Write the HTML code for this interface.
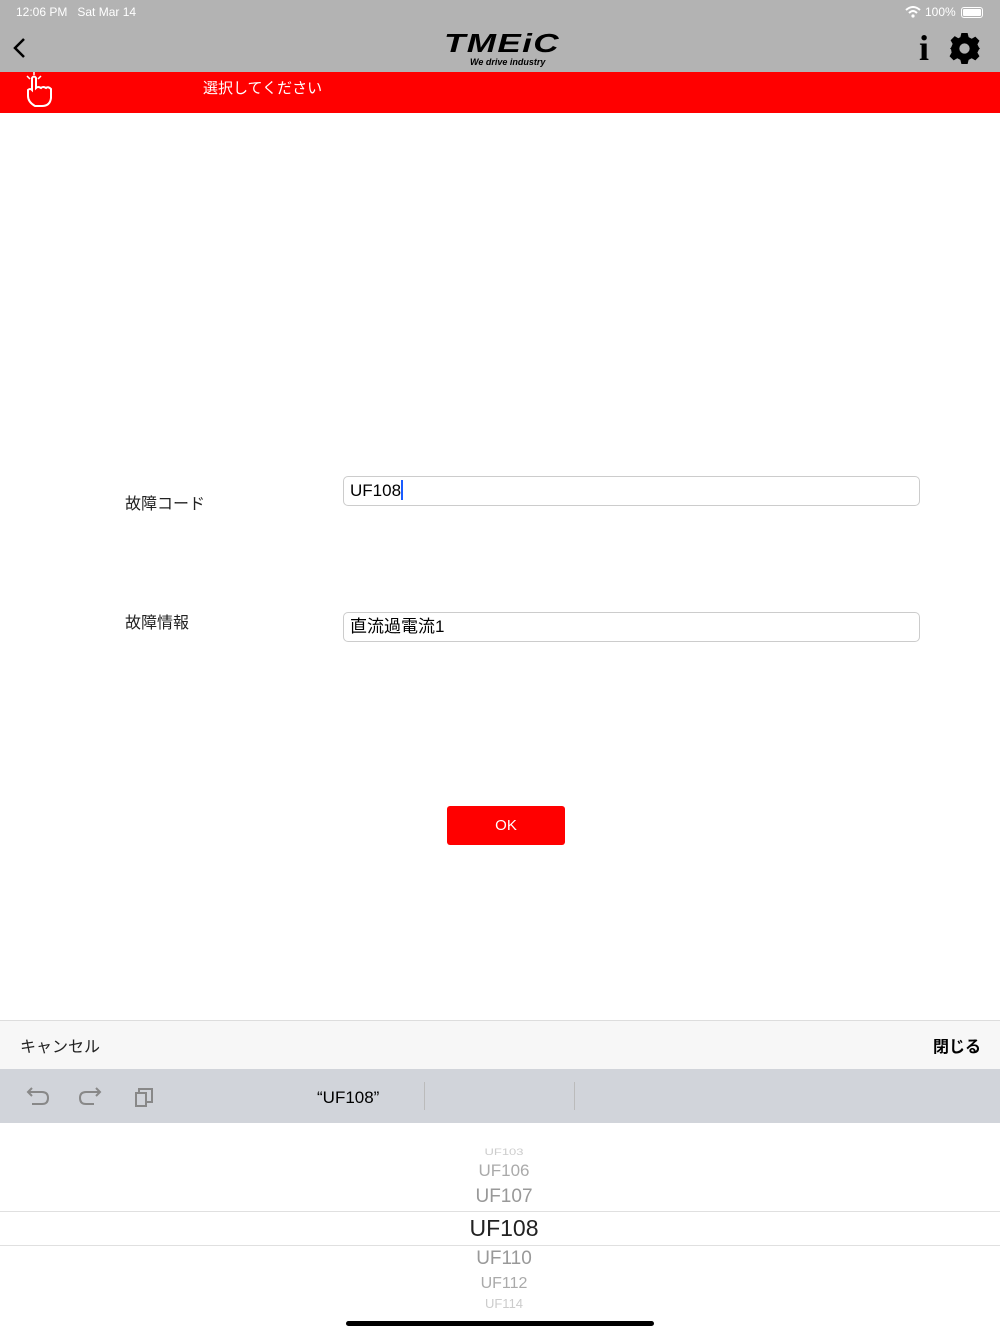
<!DOCTYPE html>
<html><head><meta charset="utf-8"><style>
*{margin:0;padding:0;box-sizing:border-box}
body{width:1000px;height:1334px;position:relative;background:#fff;font-family:"Liberation Sans","Noto Sans CJK JP",sans-serif;overflow:hidden}
.a{position:absolute}
.p{left:4px;width:1000px;text-align:center}
</style></head><body>
<div class="a" style="left:0;top:0;width:1000px;height:72px;background:#b3b3b3"></div>
<div class="a" style="left:16px;top:5px;font-size:12px;color:#fff">12:06 PM&nbsp;&nbsp; Sat Mar 14</div>
<div class="a" style="left:925px;top:5px;font-size:12px;color:#fff">100%</div>
<div class="a" style="left:961px;top:7px;width:22px;height:11px;border:1px solid #fff;border-radius:3px;padding:1px"><div style="background:#fff;width:100%;height:100%;border-radius:1px"></div></div>
<svg class="a" style="left:905px;top:6px" width="16" height="12"><path d="M1 4 Q8 -2 15 4 M4 7 Q8 3 12 7" stroke="#fff" stroke-width="2" fill="none"/><circle cx="8" cy="10" r="1.6" fill="#fff"/></svg>
<svg class="a" style="left:10px;top:36px" width="20" height="24"><path d="M14 3 L5 12 L14 21" stroke="#000" stroke-width="2.5" fill="none"/></svg>
<div class="a" style="left:444px;top:28px;font-size:26px;font-weight:bold;font-style:italic;letter-spacing:1px;color:#000;transform:scaleX(1.35);transform-origin:left top">TMEiC</div>
<div class="a" style="left:470px;top:57px;font-size:9px;font-style:italic;font-weight:bold;color:#000">We drive industry</div>
<div class="a" style="left:919px;top:30px;font-size:36px;font-weight:bold;font-family:'Liberation Serif',serif;color:#000;line-height:36px">i</div>
<svg class="a" style="left:948px;top:32px" width="33" height="33" viewBox="0 0 32 32"><path fill="#000" d="M13 1h6l1 4 3 1.5 3.5-2 4 4-2 3.5L30 15l1 1v0l-1 1-1.5 3 2 3.5-4 4-3.5-2L20 27l-1 4h-6l-1-4-3-1.5-3.5 2-4-4 2-3.5L3 17l-1-1 1-1 1.5-3.5-2-3.5 4-4 3.5 2L12 5z"/><circle cx="16" cy="16" r="5" fill="#b3b3b3"/></svg>
<div class="a" style="left:0;top:72px;width:1000px;height:41px;background:#ff0000"></div>
<svg class="a" style="left:22px;top:72px" width="34" height="38"><path d="M13 34 Q6 30 6 24 L6 18 Q8 16 10 18 L10 6 Q12 3 14 6 L14 16 Q16 14 19 16 Q21 14 24 16 Q26 14 29 17 L29 26 Q28 34 20 34 Z" stroke="#fff" stroke-width="2" fill="none"/><path d="M5 4 l3 3 M12 0 v3 M19 4 l-3 3" stroke="#fff" stroke-width="1.5"/></svg>
<div class="a" style="left:203px;top:77px;font-size:15px;color:#fff">選択してください</div>
<div class="a" style="left:125px;top:490px;font-size:16px;color:#222">故障コード</div>
<div class="a" style="left:343px;top:476px;width:577px;height:30px;border:1px solid #ccc;border-radius:5px;font-size:17px;padding:3px 6px;color:#000">UF108<span style="display:inline-block;width:2px;height:20px;background:#1a5cff;vertical-align:-4px"></span></div>
<div class="a" style="left:125px;top:609px;font-size:16px;color:#222">故障情報</div>
<div class="a" style="left:343px;top:612px;width:577px;height:30px;border:1px solid #ccc;border-radius:5px;font-size:17px;padding:2px 6px;color:#000;line-height:24px">直流過電流1</div>
<div class="a" style="left:447px;top:806px;width:118px;height:39px;background:#ff0000;border-radius:3px;color:#fff;font-size:15px;text-align:center;line-height:39px">OK</div>
<div class="a" style="left:0;top:1020px;width:1000px;height:49px;background:#f7f7f7;border-top:1px solid #ddd"></div>
<div class="a" style="left:20px;top:1033px;font-size:16px;color:#222">キャンセル</div>
<div class="a" style="left:933px;top:1033px;font-size:16px;font-weight:bold;color:#000">閉じる</div>
<div class="a" style="left:0;top:1069px;width:1000px;height:54px;background:#d1d4da"></div>
<svg class="a" style="left:26px;top:1084px" width="130" height="26" fill="none" stroke="#888" stroke-width="2"><path d="M6 4 L2 8 L6 12 M2 8 H16 Q22 8 22 14 Q22 20 16 20 H6"/><path d="M70 4 L74 8 L70 12 M74 8 H60 Q54 8 54 14 Q54 20 60 20 H68"/><rect x="110" y="9" width="10" height="13"/><path d="M113 9 V5 H126 V18 H120"/></svg>
<div class="a" style="left:317px;top:1088px;font-size:17px;color:#000">“UF108”</div>
<div class="a" style="left:424px;top:1082px;width:1px;height:28px;background:#bbb"></div>
<div class="a" style="left:574px;top:1082px;width:1px;height:28px;background:#bbb"></div>
<div class="a" style="left:0;top:1211px;width:1000px;height:1px;background:#e0e0e0"></div>
<div class="a" style="left:0;top:1245px;width:1000px;height:1px;background:#e0e0e0"></div>
<div class="a p" style="top:1143px;font-size:13px;color:#ccc;line-height:18px;transform:scaleY(.7)">UF103</div>
<div class="a p" style="top:1161px;font-size:17px;color:#aaa">UF106</div>
<div class="a p" style="top:1186px;font-size:19px;color:#999">UF107</div>
<div class="a p" style="top:1215px;font-size:23px;color:#222">UF108</div>
<div class="a p" style="top:1248px;font-size:19px;color:#999">UF110</div>
<div class="a p" style="top:1275px;font-size:16px;color:#aaa">UF112</div>
<div class="a p" style="top:1296px;font-size:13px;color:#ccc">UF114</div>
<div class="a" style="left:346px;top:1321px;width:308px;height:5px;background:#000;border-radius:3px"></div>
</body></html>
